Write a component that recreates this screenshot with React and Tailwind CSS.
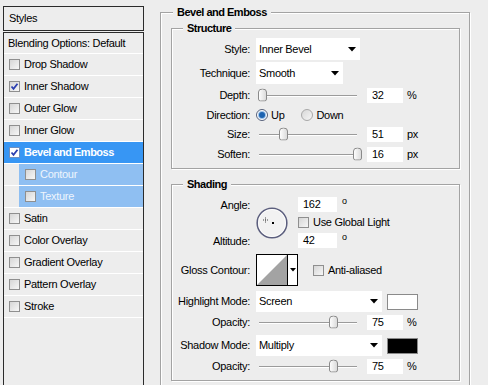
import React from 'react'

const font = "font-['Tahoma','Liberation_Sans',Arial,sans-serif]"

function Check({ checked, white }) {
  return (
    <span
      className={`flex h-[11px] w-[11px] shrink-0 items-center justify-center border ${
        white ? 'border-[#6d8fc0] bg-white' : 'border-[#8f8f8f] bg-gradient-to-br from-[#d6d6d6] to-[#f7f7f7]'
      }`}
    >
      {checked && (
        <svg width="9" height="9" viewBox="0 0 9 9">
          <path d="M1.5 4.5 L3.5 6.8 L7.5 1.8" fill="none" stroke="#2c3fb0" strokeWidth="1.8" />
        </svg>
      )}
    </span>
  )
}

function Radio({ on }) {
  return (
    <span
      className={`flex h-[12px] w-[12px] items-center justify-center rounded-full border ${
        on ? 'border-[#55607a] bg-white' : 'border-[#a8a8a8] bg-gradient-to-br from-[#d8d8d8] to-[#f6f6f6]'
      }`}
    >
      {on && <span className="h-[6px] w-[6px] rounded-full bg-[#1d63b0] shadow-[0_0_0_1px_#9cc2ea]" />}
    </span>
  )
}

function Arrow() {
  return (
    <svg width="8" height="5" viewBox="0 0 8 5" className="shrink-0">
      <path d="M0 0 H8 L4 4.5 Z" fill="#000" />
    </svg>
  )
}

function Select({ value, w }) {
  return (
    <div className={`flex h-full items-center justify-between bg-white pl-[3px] pr-[4px] ${w}`}>
      <span>{value}</span>
      <Arrow />
    </div>
  )
}

function Slider({ pos }) {
  return (
    <div className="relative h-full w-[111px]">
      <div className="absolute left-[3px] top-1/2 h-[2px] w-[98px] border-t border-[#9b9b9b] bg-white" />
      <svg width="9" height="13" viewBox="0 0 9 13" className="absolute top-1/2 -translate-y-1/2" style={{ left: pos - 4 }}>
        <defs>
          <linearGradient id="tg" x1="0" x2="1">
            <stop offset="0" stopColor="#ffffff" />
            <stop offset="1" stopColor="#d9d9d9" />
          </linearGradient>
        </defs>
        <path d="M0.5 3.5 Q0.5 0.5 4.5 0.5 Q8.5 0.5 8.5 3.5 V10.5 Q8.5 12.5 6.5 12.5 H2.5 Q0.5 12.5 0.5 10.5 Z" fill="url(#tg)" stroke="#8a8a8a" />
      </svg>
    </div>
  )
}

function Field({ value, w = 'w-[36px]' }) {
  return <div className={`flex h-[15px] items-center bg-white pl-[5px] ${w}`}>{value}</div>
}

function Row({ label, h, mt = '', children }) {
  return (
    <div className={`flex items-center ${h} ${mt}`}>
      <div className="w-[78px] text-right">{label}</div>
      <div className="ml-[6px] flex h-full items-center">{children}</div>
    </div>
  )
}

function SliderRow({ label, h, mt, pos, value, unit }) {
  return (
    <Row label={label} h={h} mt={mt}>
      <Slider pos={pos} />
      <Field value={value} />
      <span className="ml-[4px]">{unit}</span>
    </Row>
  )
}

function Group({ title, className, titleMl, children }) {
  return (
    <div className={`border border-[#a3a3a3] shadow-[inset_1px_1px_0_#fff,1px_1px_0_#fff] ${className}`}>
      <div className={`-mt-[7px] w-fit bg-[#ededed] px-[4px] font-bold leading-[13px] tracking-[-0.5px] ${titleMl}`}>{title}</div>
      {children}
    </div>
  )
}

const items = [
  { name: 'Drop Shadow' },
  { name: 'Inner Shadow', checked: true },
  { name: 'Outer Glow' },
  { name: 'Inner Glow' },
  { name: 'Bevel and Emboss', checked: true, active: true },
  { name: 'Contour', sub: true },
  { name: 'Texture', sub: true },
  { name: 'Satin' },
  { name: 'Color Overlay' },
  { name: 'Gradient Overlay' },
  { name: 'Pattern Overlay' },
  { name: 'Stroke' },
]

function StylesList() {
  return (
    <div className="ml-[3px] mt-[6px] w-[141px] shrink-0">
      <div className="flex h-[25px] items-center border border-[#2b2b2b] pl-[5px]">Styles</div>
      <div className="mt-[1px] h-[360px] border-x border-t border-[#2b2b2b]">
        <div className="flex h-[21px] items-center border-b border-white pl-[4px]">Blending Options: Default</div>
        {items.map((it) => (
          <div key={it.name} className="flex h-[22px] border-b border-white">
            {it.sub && <div className="w-[15px]" />}
            <div
              className={`flex flex-1 items-center ${it.sub ? 'bg-[#8fbff2] pl-[6px] text-[#eef5fd]' : 'pl-[5px]'} ${
                it.active ? 'bg-[#3796f4] font-bold tracking-[-0.5px] text-white' : ''
              }`}
            >
              <Check checked={it.checked} white={it.active} />
              <span className="ml-[4px]">{it.name}</span>
            </div>
          </div>
        ))}
      </div>
    </div>
  )
}

function AngleBlock() {
  return (
    <div className="mt-[4px] flex h-[56px]">
      <div className="w-[78px] text-right">
        <div className="h-[20px] leading-[20px]">Angle:</div>
        <div className="mt-[16px] h-[20px] leading-[20px]">Altitude:</div>
      </div>
      <div className="ml-[6px] mt-[12px] h-[32px] w-[32px]">
        <svg width="32" height="32" viewBox="0 0 32 32">
          <circle cx="16" cy="16" r="14.8" fill="#f2f2f2" stroke="#5c5f7e" strokeWidth="1.6" />
          <circle cx="16" cy="16" r="13.6" fill="none" stroke="#ffffff" strokeWidth="0.8" />
          <path d="M7 13 H12 M9.5 10.5 V15.5" stroke="#444" strokeWidth="1" strokeDasharray="1 1" />
          <rect x="16" y="15" width="2" height="2" fill="#000" />
        </svg>
      </div>
      <div className="ml-[10px]">
        <div className="mt-[2px] flex h-[15px] items-start">
          <Field value="162" w="w-[39px]" />
          <span className="ml-[5px] text-[9px] leading-[9px]">o</span>
        </div>
        <div className="flex h-[20px] items-center">
          <Check />
          <span className="ml-[4px]">Use Global Light</span>
        </div>
        <div className="mt-[1px] flex h-[15px] items-start">
          <Field value="42" w="w-[39px]" />
          <span className="ml-[5px] text-[9px] leading-[9px]">o</span>
        </div>
      </div>
    </div>
  )
}

function Contour() {
  return (
    <div className="flex h-[32px] w-[42px] border border-black bg-white">
      <svg width="30" height="30" viewBox="0 0 30 30">
        <path d="M0 30 L30 0 V30 Z" fill="#a3a3a3" />
      </svg>
      <div className="flex flex-1 items-center justify-center border-l border-black">
        <svg width="6" height="4" viewBox="0 0 6 4">
          <path d="M0 0 H6 L3 3.5 Z" fill="#000" />
        </svg>
      </div>
    </div>
  )
}

export default function App() {
  return (
    <div className={`flex h-[385px] w-[488px] overflow-hidden bg-[#ededed] text-[11px] leading-[13px] tracking-[-0.3px] text-black ${font}`}>
      <StylesList />
      <div className="ml-[16px] mt-[12px]">
        <Group title="Bevel and Emboss" className="h-[400px] w-[310px]" titleMl="ml-[12px]">
          <Group title="Structure" className="ml-[10px] mt-[9px] w-[289px] pb-[4px]" titleMl="ml-[11px]">
            <Row label="Style:" h="h-[22px]" mt="mt-[3px]">
              <Select value="Inner Bevel" w="w-[104px]" />
            </Row>
            <Row label="Technique:" h="h-[22px]" mt="mt-[2px]">
              <Select value="Smooth" w="w-[87px]" />
            </Row>
            <SliderRow label="Depth:" h="h-[20px]" mt="mt-[1px]" pos={6} value="32" unit="%" />
            <Row label="Direction:" h="h-[20px]">
              <Radio on />
              <span className="ml-[3px]">Up</span>
              <span className="ml-[17px]">
                <Radio />
              </span>
              <span className="ml-[3px]">Down</span>
            </Row>
            <SliderRow label="Size:" h="h-[18px]" pos={27} value="51" unit="px" />
            <SliderRow label="Soften:" h="h-[20px]" mt="mt-[1px]" pos={101} value="16" unit="px" />
          </Group>
          <Group title="Shading" className="ml-[10px] mt-[15px] w-[289px] pb-[4px]" titleMl="ml-[11px]">
            <AngleBlock />
            <Row label="Gloss Contour:" h="h-[32px]" mt="mt-[3px]">
              <Contour />
              <span className="ml-[15px]">
                <Check />
              </span>
              <span className="ml-[4px]">Anti-aliased</span>
            </Row>
            <Row label="Highlight Mode:" h="h-[21px]" mt="mt-[5px]">
              <Select value="Screen" w="w-[126px]" />
              <div className="ml-[5px] h-[16px] w-[31px] border border-[#8a8a8a] bg-white" />
            </Row>
            <SliderRow label="Opacity:" h="h-[20px]" pos={77} value="75" unit="%" />
            <Row label="Shadow Mode:" h="h-[21px]" mt="mt-[3px]">
              <Select value="Multiply" w="w-[126px]" />
              <div className="ml-[5px] h-[16px] w-[31px] border border-[#8a8a8a] bg-black" />
            </Row>
            <SliderRow label="Opacity:" h="h-[20px]" pos={77} value="75" unit="%" />
          </Group>
        </Group>
      </div>
    </div>
  )
}
